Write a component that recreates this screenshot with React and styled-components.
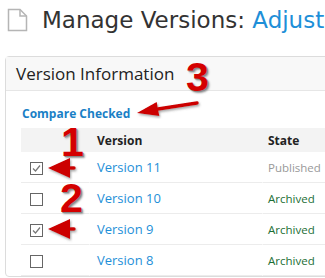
import React from 'react';
import styled, { createGlobalStyle } from 'styled-components';

const GlobalStyle = createGlobalStyle`
  body {
    margin: 0;
    background: #fff;
    font-family: "Open Sans", "DejaVu Sans", sans-serif;
    overflow: hidden;
  }
`;

const Page = styled.div`
  position: relative;
  width: 325px;
  height: 278px;
  overflow: hidden;
`;

const TitleBar = styled.h1`
  display: flex;
  align-items: center;
  gap: 14px;
  margin: 0;
  padding: 5px 0 0 7px;
  height: 29px;
  font-family: "DejaVu Sans", Verdana, sans-serif;
  font-size: 23px;
  font-weight: 400;
  color: #333;
  white-space: nowrap;
`;

const TitleLink = styled.span`
  color: #1e8fd8;
`;

const Panel = styled.section`
  margin: 22px 0 0 5px;
  width: 400px;
  border: 1px solid #dcdcdc;
  border-radius: 4px;
`;

const PanelHeader = styled.div`
  height: 33px;
  display: flex;
  align-items: center;
  padding-left: 10px;
  background: #f8f8f8;
  border-bottom: 1px solid #e6e6e6;
  font-size: 17px;
  color: #222;
`;

const PanelBody = styled.div`
  padding: 14px 0 0 15px;
`;

const CompareLink = styled.a`
  display: block;
  font-size: 12px;
  font-weight: 700;
  color: #1a7fc6;
  text-decoration: none;
  margin-bottom: 6px;
  padding-left: 1px;
`;

const Table = styled.table`
  border-collapse: separate;
  border-spacing: 0;
  width: 380px;
  font-size: 13px;
`;

const HeadCell = styled.th`
  height: 24px;
  padding: 0 ${({ $pad }) => $pad || 6}px;
  text-align: left;
  background: #f3f3f3;
  font-size: 12px;
  font-weight: 700;
  color: #222;
  width: ${({ $w }) => ($w ? `${$w}px` : 'auto')};
`;

const Cell = styled.td`
  height: 30px;
  padding: 0 ${({ $pad }) => $pad || 6}px;
  border-bottom: 1px solid #ececec;
  border-right: ${({ $last }) => ($last ? 'none' : '1px solid #fff')};
  color: ${({ $color }) => $color || '#222'};
  font-size: ${({ $size }) => $size || 13}px;
`;

const VersionLink = styled.a`
  color: #1e8fd8;
  text-decoration: none;
`;

const Box = styled.span`
  display: inline-flex;
  align-items: center;
  justify-content: center;
  width: 11px;
  height: 11px;
  border: 1px solid #666;
  background: #fff;
  margin-left: 3px;
  vertical-align: middle;
`;

const Mark = styled.span`
  position: absolute;
  left: ${({ $x }) => $x}px;
  top: ${({ $y }) => $y}px;
  font-family: "Liberation Sans", Arial, sans-serif;
  font-weight: 700;
  font-size: 41px;
  line-height: 1;
  color: #d40000;
  text-shadow: 1px 1px 0 #8a8a8a, 2px 2px 2px #999;
`;

const Overlay = styled.svg`
  position: absolute;
  left: 0;
  top: 0;
  pointer-events: none;
`;

function PageIcon() {
  return (
    <svg width="21" height="24" viewBox="0 0 21 24">
      <path d="M1.5 1.5 H13 L19.5 8 V22.5 H1.5 Z" fill="#fff" stroke="#b5b5b5" strokeWidth="1.5" />
      <path d="M13 1.5 V8 H19.5" fill="none" stroke="#b5b5b5" strokeWidth="1.5" />
    </svg>
  );
}

function Check({ checked }) {
  return (
    <Box>
      {checked && (
        <svg width="9" height="9" viewBox="0 0 9 9">
          <path d="M1 4.5 L3.5 7 L8 1.5" fill="none" stroke="#777" strokeWidth="1.2" />
        </svg>
      )}
    </Box>
  );
}

const rows = [
  { name: 'Version 11', state: 'Published', checked: true },
  { name: 'Version 10', state: 'Archived', checked: false },
  { name: 'Version 9', state: 'Archived', checked: true },
  { name: 'Version 8', state: 'Archived', checked: false },
];

function Arrow({ tip, base, half, tail }) {
  const [tx, ty] = tip;
  const [bx, by] = base;
  const dx = bx - tx;
  const dy = by - ty;
  const len = Math.hypot(dx, dy);
  const nx = -dy / len;
  const ny = dx / len;
  const points = `${tx},${ty} ${bx + nx * half},${by + ny * half} ${bx - nx * half},${by - ny * half}`;
  return (
    <g filter="url(#shade)">
      {tail && <line x1={bx} y1={by} x2={tail[0]} y2={tail[1]} stroke="#cc0000" strokeWidth="3.5" strokeLinecap="round" />}
      <polygon points={points} fill="#cc0000" />
    </g>
  );
}

export default function App() {
  return (
    <Page>
      <GlobalStyle />
      <TitleBar>
        <PageIcon />
        <span>
          Manage Versions: <TitleLink>Adjust</TitleLink>
        </span>
      </TitleBar>
      <Panel>
        <PanelHeader>Version Information</PanelHeader>
        <PanelBody>
          <CompareLink>Compare Checked</CompareLink>
          <Table>
            <thead>
              <tr>
                <HeadCell $w={57} />
                <HeadCell $w={159} $pad={7}>Version</HeadCell>
                <HeadCell $pad={5}>State</HeadCell>
              </tr>
            </thead>
            <tbody>
              {rows.map((r) => (
                <tr key={r.name}>
                  <Cell><Check checked={r.checked} /></Cell>
                  <Cell $pad={7}><VersionLink>{r.name}</VersionLink></Cell>
                  <Cell $pad={5} $last $size={11.5} $color={r.state === 'Published' ? '#999' : '#1c6e35'}>{r.state}</Cell>
                </tr>
              ))}
            </tbody>
          </Table>
        </PanelBody>
      </Panel>
      <Mark $x={186} $y={57}>3</Mark>
      <Mark $x={61} $y={122}>1</Mark>
      <Mark $x={60} $y={178}>2</Mark>
      <Overlay width="325" height="278">
        <defs>
          <filter id="shade" x="-20%" y="-20%" width="140%" height="140%">
            <feDropShadow dx="1" dy="1.5" stdDeviation="1" floodColor="#666" floodOpacity="0.6" />
          </filter>
        </defs>
        <Arrow tip={[137, 113]} base={[158, 109]} half={7} tail={[197, 103]} />
        <Arrow tip={[48, 168]} base={[70, 168]} half={10} tail={[74, 168]} />
        <Arrow tip={[48, 229]} base={[70, 229]} half={10} tail={[74, 229]} />
      </Overlay>
    </Page>
  );
}
